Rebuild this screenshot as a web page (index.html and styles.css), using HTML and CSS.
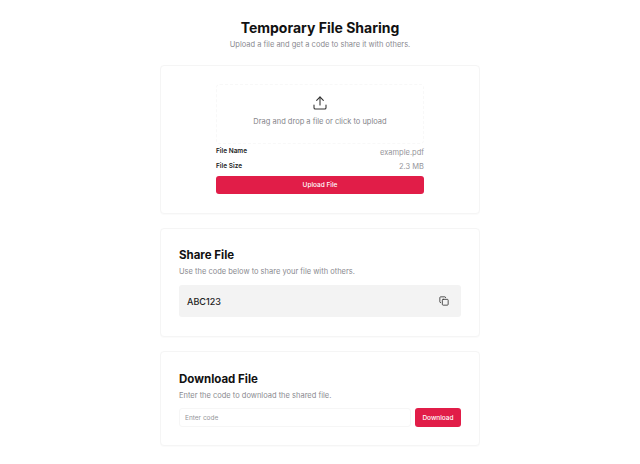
FILE: index.html
```html
<!DOCTYPE html>
<html lang="en">
<head>
<meta charset="utf-8">
<title>Temporary File Sharing</title>
<link rel="stylesheet" href="styles.css">
</head>
<body>
<main class="page">
  <header class="hero">
    <h1>Temporary File Sharing</h1>
    <p>Upload a file and get a code to share it with others.</p>
  </header>
  <section class="card upload-card">
    <div class="upload-inner">
      <div class="dropzone">
        <svg class="upload-icon" viewBox="0 0 24 24" width="16" height="16" fill="none" stroke="#333" stroke-width="1.6" stroke-linecap="round" stroke-linejoin="round"><path d="M21 15v4a2 2 0 0 1-2 2H5a2 2 0 0 1-2-2v-4"/><path d="M17 8l-5-5-5 5"/><path d="M12 3v12"/></svg>
        <span>Drag and drop a file or click to upload</span>
      </div>
      <div class="meta first"><b>File Name</b><span>example.pdf</span></div>
      <div class="meta second"><b>File Size</b><span>2.3 MB</span></div>
      <button class="btn btn-wide">Upload File</button>
    </div>
  </section>
  <section class="card share-card">
    <h2>Share File</h2>
    <p>Use the code below to share your file with others.</p>
    <div class="code-box">
      <span>ABC123</span>
      <svg viewBox="0 0 24 24" width="10" height="10" fill="none" stroke="#333" stroke-width="2" stroke-linecap="round" stroke-linejoin="round"><rect x="8" y="8" width="14" height="14" rx="2"/><path d="M4 16a2 2 0 0 1-2-2V4a2 2 0 0 1 2-2h10a2 2 0 0 1 2 2"/></svg>
    </div>
  </section>
  <section class="card download-card">
    <h2>Download File</h2>
    <p>Enter the code to download the shared file.</p>
    <div class="download-row">
      <input type="text" placeholder="Enter code">
      <button class="btn btn-small">Download</button>
    </div>
  </section>
</main>
</body>
</html>
```
FILE: styles.css
```css
* { box-sizing: border-box; }
html, body { margin: 0; background: #fff; }
body { font-family: Inter, "Liberation Sans", sans-serif; color: #111; height: 464px; overflow: hidden; }
.page { width: 320px; margin: 0 auto; padding-top: 19px; display: flex; flex-direction: column; }
.hero { text-align: center; margin-bottom: 15px; }
h1 { margin: 0; font-size: 14px; line-height: 18px; font-weight: 700; color: #111; }
.hero p { margin: 3px 0 0; font-size: 7.5px; line-height: 10px; color: #8a8a8f; }
.card { border: 1px solid #f5f5f5; border-radius: 4px; background: #fff; box-shadow: 0 1px 1px rgba(0,0,0,.02); }
.upload-card { height: 149px; padding: 18px 0 0; margin-bottom: 14px; }
.upload-inner { width: 208px; margin: 0 auto; }
.dropzone { height: 60px; border: 1px dashed #f8f8f8; border-radius: 4px; display: flex; flex-direction: column; align-items: center; padding-top: 10px; gap: 6px; font-size: 7.5px; line-height: 10px; color: #85858a; }
.upload-icon { display: block; }
.meta { display: flex; justify-content: space-between; align-items: center; height: 15px; font-size: 6.5px; }
.meta.first { margin-top: -1px; }
.meta.first span { padding-top: 4px; }
.meta.second span { padding-top: 2px; }
.meta b { font-weight: 600; color: #222; }
.meta span { font-size: 7.5px; color: #95959a; }
.btn { border: 0; border-radius: 3px; background: #e11d48; color: #fff; font-family: inherit; font-weight: 500; font-size: 6.5px; padding: 0; }
.btn-wide { display: block; width: 100%; height: 18px; margin-top: 3px; }
.share-card { height: 109px; padding: 19px 18px 0; margin-bottom: 14px; }
h2 { margin: 0; font-size: 11.5px; line-height: 14px; font-weight: 700; color: #111; }
.card p { margin: 5px 0 0; font-size: 7.5px; line-height: 10px; color: #8a8a8f; }
.code-box { margin-top: 8px; height: 32px; background: #f3f3f3; border-radius: 3px; display: flex; justify-content: space-between; align-items: center; padding: 0 12px 0 8px; font-size: 9px; font-weight: 500; color: #222; }
.download-card { height: 95px; padding: 20px 18px 0; }
.download-row { display: flex; gap: 4px; margin-top: 7px; }
input { flex: 1; min-width: 0; height: 19px; border: 1px solid #f6f6f6; border-radius: 3px; padding: 0 5px; font-family: inherit; font-size: 6.5px; color: #222; background: #fff; outline: 0; }
input::placeholder { color: #95959a; }
.btn-small { width: 46px; height: 19px; }
```
